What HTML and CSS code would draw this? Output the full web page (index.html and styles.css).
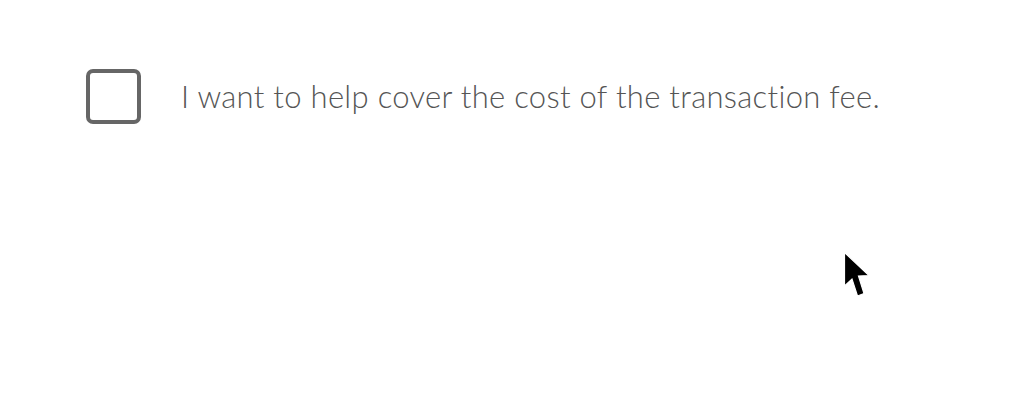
FILE: index.html
```html
<!DOCTYPE html>
<html>
<head>
<meta charset="utf-8">
<link rel="stylesheet" href="styles.css">
</head>
<body>
<div class="page">
  <label class="option">
    <span class="box"></span>
    <span class="label">I want to help cover the cost of the transaction fee.</span>
  </label>
  <svg class="cursor" width="30" height="50" viewBox="0 0 30 50">
    <path d="M1.5 1.5 L1.5 35 L9 28 L14.5 45 L21 42.5 L15.5 25 L26 24.5 Z" fill="#000" stroke="#fff" stroke-width="1.2" stroke-linejoin="miter"/>
  </svg>
</div>
</body>
</html>
```
FILE: styles.css
```css
html, body {
  margin: 0;
  padding: 0;
  background: #fff;
}
.page {
  position: relative;
  width: 1012px;
  height: 400px;
  padding: 69px 0 0 86px;
  box-sizing: border-box;
}
.option {
  display: flex;
  align-items: center;
  gap: 40px;
}
.box {
  width: 55px;
  height: 55px;
  box-sizing: border-box;
  border: 4px solid #666;
  border-radius: 7px;
  flex: none;
}
.label {
  font-family: "Lato", "Open Sans", sans-serif;
  font-weight: 300;
  font-size: 31px;
  line-height: 1.2;
  color: #555;
  letter-spacing: 0.3px;
}
.cursor {
  position: absolute;
  left: 842.5px;
  top: 250.5px;
}
```
